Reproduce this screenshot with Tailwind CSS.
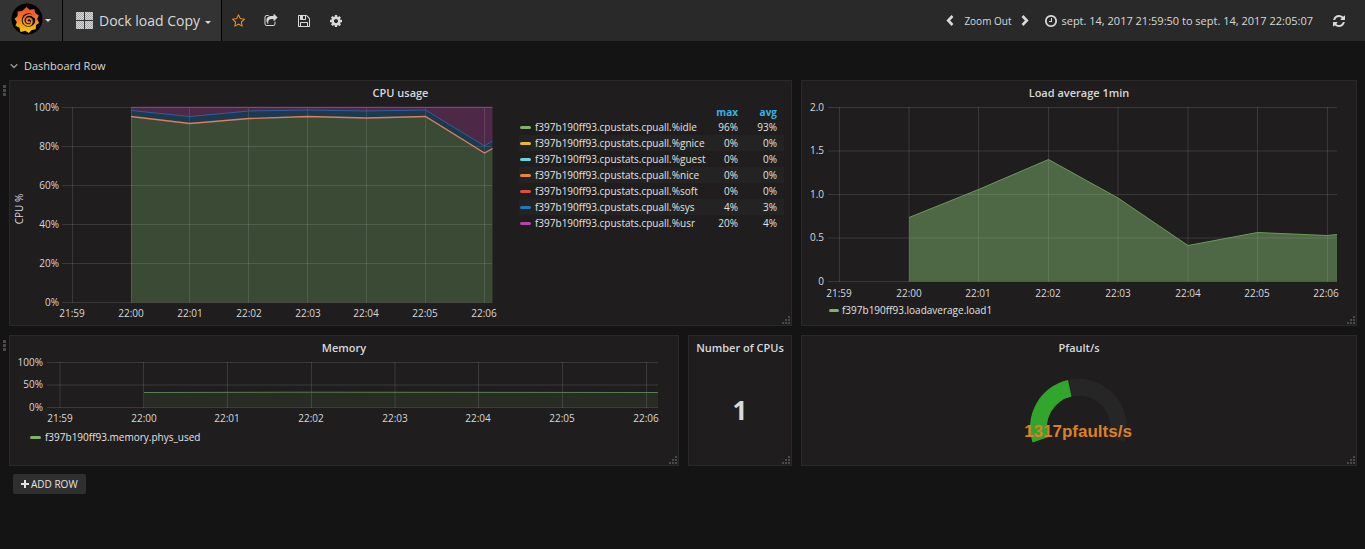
<!DOCTYPE html>
<html lang="en">
<head>
<meta charset="utf-8">
<meta name="viewport" content="width=device-width, initial-scale=1">
<title>Dock load Copy</title>
<script src="https://cdn.jsdelivr.net/npm/@tailwindcss/browser@4"></script>
</head>
<body class="min-h-screen bg-[#141414] font-['Open_Sans',sans-serif] text-[#d8d9da]">
<svg class="hidden" aria-hidden="true">
  <symbol id="grip" viewBox="0 0 9 9"><path fill="#4a4a4a" d="M6 0h2v2H6zM3 3h2v2H3zM6 3h2v2H6zM0 6h2v2H0zM3 6h2v2H3zM6 6h2v2H6z"/></symbol>
</svg>

<header class="flex h-[41px] items-stretch bg-[#292929]">
  <button aria-label="Main menu" class="flex w-[63px] items-center border-r border-black bg-[#333] pr-1 pl-[11px]">
    <svg class="-mt-1 size-8" viewBox="0 0 32 32">
      <defs><linearGradient id="flame" gradientUnits="userSpaceOnUse" x1="0" y1="4" x2="0" y2="30"><stop offset="0" stop-color="#ef4e28"/><stop offset=".45" stop-color="#f37a26"/><stop offset="1" stop-color="#fcd30a"/></linearGradient></defs>
      <circle cx="16" cy="16" r="15.500" fill="#000"/>
      <path fill="url(#flame)" d="M15.500 4l3.200 2.800 4.600-.8.900 4 3.600 2.600-1.600 3.300 1.900 4-3 2.200-.4 4.200-4 .6-3 3-3.400-2.200-4.800 1.300-1-4.300-4-2 1.300-3.600-2.300-3.400 3-2.600.2-4.600 4.300-.4z"/>
      <circle cx="17.500" cy="17" r="6.800" fill="#000"/>
      <path fill="none" stroke="url(#flame)" stroke-width="1.900" stroke-linecap="round" d="M18.500 19.300c-2 .4-3.200-1-2.800-2.500.7-2.200 4-2.200 5 .3 1.200 3.200-1.500 5.700-4.300 5-3.800-1-4.800-5-2.900-7.600 2.400-3.400 7.300-3.300 9.800-.5"/>
    </svg>
    <svg class="ml-[2px] h-1 w-[6px]" viewBox="0 0 6 4"><path fill="#d8d9da" d="M0 0h6L3 3z"/></svg>
  </button>
  <button class="flex w-[159px] items-center border-r border-black bg-[#333] pl-[13px]">
    <svg class="size-[17px]" viewBox="0 0 17 17">
      <defs><pattern id="mesh" width="2" height="2" patternUnits="userSpaceOnUse"><path fill="#d6d7d8" d="M0 0h2v2H0z"/><path fill="#a6a8aa" d="M0 0h1v1H0zM1 1h1v1H1z"/></pattern></defs>
      <path fill="url(#mesh)" d="M0 0h8v8H0zM9 0h8v8H9zM0 9h8v8H0zM9 9h8v8H9z"/>
    </svg>
    <span class="ml-[6px] text-[14px] leading-5">Dock load Copy</span>
    <svg class="mt-1 ml-[5px] h-1 w-[6px]" viewBox="0 0 6 4"><path fill="#d8d9da" d="M0 0h6L3 3z"/></svg>
  </button>
  <div class="flex items-center gap-[18px] pl-[10px]">
    <button aria-label="Star"><svg class="size-[14px]" viewBox="0 0 1792 1792" fill="#f79520"><path d="M1137 1004l306-297-422-62-189-382-189 382-422 62 306 297-73 421 378-199 377 199zm527-357q0 22-26 48l-363 354 86 500q1 7 1 20 0 50-41 50-19 0-40-12l-449-236-449 236q-22 12-40 12-21 0-31.500-14.500t-10.500-35.500q0-6 2-20l86-500-364-354q-25-27-25-48 0-37 56-46l502-73 225-455q19-41 49-41t49 41l225 455 502 73q56 9 56 46z"/></svg></button>
    <button aria-label="Share"><svg class="size-[14px]" viewBox="0 0 1792 1792" fill="#d8d9da"><path d="M1472 989v259q0 119-84.500 203.500t-203.500 84.500h-832q-119 0-203.500-84.500t-84.500-203.500v-832q0-119 84.500-203.500t203.500-84.500h255q13 0 22.500 9.500t9.500 22.500q0 27-26 32-77 26-133 60-10 4-16 4h-112q-66 0-113 47t-47 113v832q0 66 47 113t113 47h832q66 0 113-47t47-113v-214q0-19 18-29 28-13 54-37 16-16 35-8 21 9 21 29zm237-496l-384 384q-18 19-45 19-12 0-25-5-39-17-39-59v-192h-160q-323 0-438 131-119 137-74 473 3 23-20 34-8 2-12 2-16 0-26-13-10-14-21-31t-39.500-68.500-49.500-99.500-38.500-114-17.500-122q0-49 3.500-91t14-90 28-88 47-81.500 68.500-74 94.500-61.500 124.500-48.500 159.500-30.500 196.500-11h160v-192q0-42 39-59 13-5 25-5 26 0 45 19l384 384q19 19 19 45t-19 45z"/></svg></button>
    <button aria-label="Save" class="pl-px"><svg class="size-[14px]" viewBox="0 0 1792 1792" fill="#d8d9da"><path d="M512 1536h768v-384h-768v384zm896 0h128v-896q0-14-10-38.500t-20-34.500l-281-281q-10-10-34-20t-39-10v416q0 40-28 68t-68 28h-576q-40 0-68-28t-28-68v-416h-128v1280h128v-416q0-40 28-68t68-28h832q40 0 68 28t28 68v416zm-384-928v-320q0-13-9.500-22.500t-22.500-9.500h-192q-13 0-22.500 9.500t-9.500 22.500v320q0 13 9.500 22.500t22.500 9.500h192q13 0 22.500-9.500t9.500-22.500zm640 32v928q0 40-28 68t-68 28h-1344q-40 0-68-28t-28-68v-1344q0-40 28-68t68-28h928q40 0 88 20t76 48l280 280q28 28 48 76t20 88z"/></svg></button>
    <button aria-label="Settings"><svg class="size-[14px]" viewBox="0 0 1792 1792" fill="#d8d9da"><path d="M1152 896q0-106-75-181t-181-75-181 75-75 181 75 181 181 75 181-75 75-181zm512-109v222q0 12-8 23t-20 13l-185 28q-19 54-39 91 35 50 107 138 10 12 10 25t-9 23q-27 37-99 108t-94 71q-12 0-26-9l-138-108q-44 23-91 38-16 136-29 186-7 28-36 28h-222q-14 0-24.500-8.500t-11.500-21.500l-28-184q-49-16-90-37l-141 107q-10 9-25 9-14 0-25-11-126-114-165-168-7-10-7-23 0-12 8-23 15-21 51-66.500t54-70.500q-27-50-41-99l-183-27q-13-2-21-12.500t-8-23.500v-222q0-12 8-23t19-13l186-28q14-46 39-92-40-57-107-138-10-12-10-24 0-10 9-23 26-36 98.500-107.500t94.500-71.500q13 0 26 10l138 107q44-23 91-38 16-136 29-186 7-28 36-28h222q14 0 24.500 8.500t11.500 21.500l28 184q49 16 90 37l142-107q9-9 24-9 13 0 25 10 129 119 165 170 7 8 7 22 0 12-8 23-15 21-51 66.500t-54 70.500q26 50 41 98l183 28q13 2 21 12.500t8 23.500z"/></svg></button>
  </div>
  <div class="ml-auto flex items-center pr-5">
    <button aria-label="Shift time range back"><svg class="h-[11px] w-2" viewBox="0 0 8 11"><path fill="none" stroke="#d8d9da" stroke-width="2.600" d="M6.500 1L2.200 5.500l4.300 4.500"/></svg></button>
    <button class="ml-[10px] text-[10px] leading-4">Zoom Out</button>
    <button aria-label="Shift time range forward" class="ml-[10px]"><svg class="h-[11px] w-2" viewBox="0 0 8 11"><path fill="none" stroke="#d8d9da" stroke-width="2.600" d="M1.500 1l4.300 4.500L1.500 10"/></svg></button>
    <button class="ml-4 flex items-center gap-1 text-[11px] leading-4">
      <svg class="size-3 shrink-0" viewBox="128 128 1536 1536" fill="#d8d9da"><path d="M1024 544v448q0 14-9 23t-23 9h-320q-14 0-23-9t-9-23v-64q0-14 9-23t23-9h224v-352q0-14 9-23t23-9h64q14 0 23 9t9 23zm416 352q0-148-73-273t-198-198-273-73-273 73-198 198-73 273 73 273 198 198 273 73 273-73 198-198 73-273zm224 0q0 209-103 385.500t-279.500 279.500-385.500 103-385.500-103-279.500-279.500-103-385.500 103-385.500 279.500-279.500 385.500-103 385.500 103 279.500 279.500 103 385.500z"/></svg>
      <span>sept. 14, 2017 21:59:50 to sept. 14, 2017 22:05:07</span>
    </button>
    <button aria-label="Refresh" class="ml-5"><svg class="size-3" viewBox="128 128 1536 1536" fill="#d8d9da"><path d="M1639 1056q0 5-1 7-64 268-268 434.500t-478 166.500q-146 0-282.500-55t-243.500-157l-129 129q-19 19-45 19t-45-19-19-45v-448q0-26 19-45t45-19h448q26 0 45 19t19 45-19 45l-137 137q71 66 161 102t187 36q134 0 250-65t186-179q11-17 53-117 8-23 30-23h192q13 0 22.500 9.500t9.500 22.500zm25-800v448q0 26-19 45t-45 19h-448q-26 0-45-19t-19-45 19-45l138-138q-148-137-349-137-134 0-250 65t-186 179q-11 17-53 117-8 23-30 23h-199q-13 0-22.500-9.500t-9.500-22.500v-7q65-268 270-434.500t480-166.500q146 0 284 55.500t245 156.500l130-129q19-19 45-19t45 19 19 45z"/></svg></button>
  </div>
</header>

<main class="pt-4 pr-2">
  <button class="ml-[10px] flex items-center gap-[6px] text-[11px] leading-[18px]">
    <svg class="h-2 w-2" viewBox="0 0 8 8"><path fill="none" stroke="#999" stroke-width="1.300" d="M.7 2.200L4 5.500l3.300-3.300"/></svg>
    Dashboard Row
  </button>

  <div class="mt-[5px] grid grid-cols-[670fr_104fr_556fr] gap-[9px] pl-[9px]">
    <section class="relative col-span-2 flex flex-col border border-[#292929] bg-[#1f1d1d]">
      <svg class="absolute top-1 -left-[7px] h-3 w-1" viewBox="0 0 4 12"><path fill="#4a4a4a" d="M0 0h3v3H0zM0 4h3v3H0zM0 8h3v3H0z"/></svg>
      <h2 class="text-center text-[11px] leading-6 font-semibold">CPU usage</h2>
      <div class="flex h-[220px]">
        <svg class="h-full min-w-0 flex-1 overflow-visible" viewBox="10 105 490 220" preserveAspectRatio="none" font-size="10" fill="#d8d9da" role="img" aria-label="CPU usage over time">
          <path fill="#7eb26d" fill-opacity=".3" d="M131 116.500L190 123.500 249 118.500 308 116.500 366.500 118 425.500 116.500 484.500 153 492.500 148.500V302.500H131z"/>
          <path fill="#1f78c1" fill-opacity=".3" d="M131 116.500L190 123.500 249 118.500 308 116.500 366.500 118 425.500 116.500 484.500 153 492.500 148.500V141L484.500 146 425.500 110 366.500 111 308 110 249 111 190 116.500 131 110.500z"/>
          <path fill="#ba43a9" fill-opacity=".3" d="M131 110.500L190 116.500 249 111 308 110 366.500 111 425.500 110 484.500 146 492.500 141V106.500H131z"/>
          <path fill="none" stroke="#c8c8c8" stroke-opacity=".16" d="M62 107.500H492M62 146.500H492M62 185.500H492M62 224.500H492M62 263.500H492M62 302.500H492M72.500 107V303M131.500 107V303M189.500 107V303M248.500 107V303M307.500 107V303M366.500 107V303M425.500 107V303M484.500 107V303"/>
          <path fill="none" stroke="#d9805c" stroke-width="1.300" d="M131 116.500L190 123.500 249 118.500 308 116.500 366.500 118 425.500 116.500 484.500 153 492.500 148.500"/>
          <path fill="none" stroke="#2d5fa0" d="M131 110.500L190 116.500 249 111 308 110 366.500 111 425.500 110 484.500 146 492.500 141"/>
          <path fill="none" stroke="#8a3f80" d="M131 107.500H492.500"/>
          <g text-anchor="end"><text x="59" y="111">100%</text><text x="59" y="150">80%</text><text x="59" y="189">60%</text><text x="59" y="228">40%</text><text x="59" y="267">20%</text><text x="59" y="306">0%</text></g>
          <g text-anchor="middle"><text x="72" y="317">21:59</text><text x="131" y="317">22:00</text><text x="190" y="317">22:01</text><text x="249" y="317">22:02</text><text x="308" y="317">22:03</text><text x="366" y="317">22:04</text><text x="425" y="317">22:05</text><text x="484" y="317">22:06</text></g>
          <text transform="translate(23 209) rotate(-90)" text-anchor="middle">CPU %</text>
        </svg>
        <div class="w-[291px] pr-[7px] pl-[19px]">
          <table class="w-full text-[10px] leading-4 text-[#e3e3e3]">
            <thead><tr class="text-right leading-[14px] text-[#33b5e5]"><td class="w-[172px] p-0"></td><th scope="col" class="p-0 font-bold">max</th><th scope="col" class="w-[46px] p-0 pr-[7px] font-bold">avg</th></tr></thead>
            <tbody class="text-right">
              <tr><td class="flex items-center p-0 pl-px"><i class="mr-1 h-[3px] w-[11px] rounded-sm bg-[#7eb26d]"></i>f397b190ff93.cpustats.cpuall.%idle</td><td class="p-0">96%</td><td class="p-0 pr-[7px]">93%</td></tr>
              <tr class="bg-[#242323]"><td class="flex items-center p-0 pl-px"><i class="mr-1 h-[3px] w-[11px] rounded-sm bg-[#eab839]"></i>f397b190ff93.cpustats.cpuall.%gnice</td><td class="p-0">0%</td><td class="p-0 pr-[7px]">0%</td></tr>
              <tr><td class="flex items-center p-0 pl-px"><i class="mr-1 h-[3px] w-[11px] rounded-sm bg-[#6ed0e0]"></i>f397b190ff93.cpustats.cpuall.%guest</td><td class="p-0">0%</td><td class="p-0 pr-[7px]">0%</td></tr>
              <tr class="bg-[#242323]"><td class="flex items-center p-0 pl-px"><i class="mr-1 h-[3px] w-[11px] rounded-sm bg-[#ef843c]"></i>f397b190ff93.cpustats.cpuall.%nice</td><td class="p-0">0%</td><td class="p-0 pr-[7px]">0%</td></tr>
              <tr><td class="flex items-center p-0 pl-px"><i class="mr-1 h-[3px] w-[11px] rounded-sm bg-[#e24d42]"></i>f397b190ff93.cpustats.cpuall.%soft</td><td class="p-0">0%</td><td class="p-0 pr-[7px]">0%</td></tr>
              <tr class="bg-[#242323]"><td class="flex items-center p-0 pl-px"><i class="mr-1 h-[3px] w-[11px] rounded-sm bg-[#1f78c1]"></i>f397b190ff93.cpustats.cpuall.%sys</td><td class="p-0">4%</td><td class="p-0 pr-[7px]">3%</td></tr>
              <tr><td class="flex items-center p-0 pl-px"><i class="mr-1 h-[3px] w-[11px] rounded-sm bg-[#ba43a9]"></i>f397b190ff93.cpustats.cpuall.%usr</td><td class="p-0">20%</td><td class="p-0 pr-[7px]">4%</td></tr>
            </tbody>
          </table>
        </div>
      </div>
      <svg class="absolute right-0 bottom-0 size-[9px]"><use href="#grip"/></svg>
    </section>

    <section class="relative flex flex-col border border-[#292929] bg-[#1f1d1d]">
      <h2 class="text-center text-[11px] leading-6 font-semibold">Load average 1min</h2>
      <svg class="h-[197px] w-full overflow-visible" viewBox="802 105 554 197" preserveAspectRatio="none" font-size="10" fill="#d8d9da" role="img" aria-label="Load average over time">
        <path fill="#7eb26d" fill-opacity=".5" d="M909 217.500L978.500 189.500 1048.500 159.500 1118 198 1188 245.500 1257.500 232.500 1327 235.500 1337 234.500V281.500H909z"/>
        <path fill="none" stroke="#c8c8c8" stroke-opacity=".16" d="M828 107.500H1337M828 151H1337M828 194.500H1337M828 238H1337M828 281.500H1337M839.500 107V282M909 107V282M978.500 107V282M1048.500 107V282M1118 107V282M1188 107V282M1257.500 107V282M1327.500 107V282"/>
        <path fill="none" stroke="#6a9a5c" d="M909 217.500L978.500 189.500 1048.500 159.500 1118 198 1188 245.500 1257.500 232.500 1327 235.500 1337 234.500"/>
        <g text-anchor="end"><text x="824" y="111">2.0</text><text x="824" y="154">1.5</text><text x="824" y="198">1.0</text><text x="824" y="241">0.5</text><text x="824" y="285">0</text></g>
        <g text-anchor="middle"><text x="839" y="297">21:59</text><text x="909" y="297">22:00</text><text x="978" y="297">22:01</text><text x="1048" y="297">22:02</text><text x="1118" y="297">22:03</text><text x="1188" y="297">22:04</text><text x="1257" y="297">22:05</text><text x="1326" y="297">22:06</text></g>
      </svg>
      <p class="flex items-center pl-[27px] text-[10px] leading-4 text-[#e3e3e3]"><i class="mr-[3px] h-[3px] w-[10px] rounded-sm bg-[#7eb26d]"></i>f397b190ff93.loadaverage.load1</p>
      <svg class="absolute right-0 bottom-0 size-[9px]"><use href="#grip"/></svg>
    </section>

    <section class="relative flex h-[131px] flex-col border border-[#292929] bg-[#1f1d1d]">
      <svg class="absolute top-1 -left-[7px] h-3 w-1" viewBox="0 0 4 12"><path fill="#4a4a4a" d="M0 0h3v3H0zM0 4h3v3H0zM0 8h3v3H0z"/></svg>
      <h2 class="text-center text-[11px] leading-6 font-semibold">Memory</h2>
      <svg class="h-[69px] w-full overflow-visible" viewBox="10 360 668 69" preserveAspectRatio="none" font-size="10" fill="#d8d9da" role="img" aria-label="Memory over time">
        <path fill="#7eb26d" fill-opacity=".1" d="M144 392.500H658V407.500H144z"/>
        <path fill="none" stroke="#c8c8c8" stroke-opacity=".16" d="M47 362.500H658M47 385H658M47 407.500H658M60 362V408M143.500 362V408M227.500 362V408M311.500 362V408M395 362V408M478.500 362V408M562.500 362V408M646.500 362V408"/>
        <path fill="none" stroke="#5b8050" d="M144 392.500L300 392.200 658 392.500"/>
        <g text-anchor="end"><text x="43" y="366">100%</text><text x="43" y="388">50%</text><text x="43" y="411">0%</text></g>
        <g text-anchor="middle"><text x="60" y="422">21:59</text><text x="144" y="422">22:00</text><text x="227" y="422">22:01</text><text x="311" y="422">22:02</text><text x="395" y="422">22:03</text><text x="478" y="422">22:04</text><text x="562" y="422">22:05</text><text x="646" y="422">22:06</text></g>
      </svg>
      <p class="flex items-center pl-5 text-[10px] leading-4 text-[#e3e3e3]"><i class="mr-1 h-[3px] w-[11px] rounded-sm bg-[#7eb26d]"></i>f397b190ff93.memory.phys_used</p>
      <svg class="absolute right-0 bottom-0 size-[9px]"><use href="#grip"/></svg>
    </section>

    <section class="relative flex flex-col border border-[#292929] bg-[#1f1d1d]">
      <h2 class="text-center text-[11px] leading-6 font-semibold whitespace-nowrap">Number of CPUs</h2>
      <p class="flex flex-1 items-center justify-center pb-[6px] text-[26px] leading-8 font-bold">1</p>
      <svg class="absolute right-0 bottom-0 size-[9px]"><use href="#grip"/></svg>
    </section>

    <section class="relative flex flex-col border border-[#292929] bg-[#1f1d1d]">
      <h2 class="text-center text-[11px] leading-6 font-semibold">Pfault/s</h2>
      <svg class="h-[104px] w-full" viewBox="0 2 554 104" role="img" aria-label="1317 pfaults per second">
        <path fill="#262626" d="M267 21.500A48.500 48.500 0 0 1 322.500 84L307 78.500A31.500 31.500 0 0 0 270 38.500z"/>
        <path fill="#32a52c" d="M230.500 84.500A48.500 48.500 0 0 1 266 22L269.500 38.500A31.500 31.500 0 0 0 246.500 79z"/>
        <text x="276" y="79" text-anchor="middle" font-family="Liberation Sans, Arial, sans-serif" font-size="17" font-weight="700" fill="#df7f25">1317pfaults/s</text>
      </svg>
      <svg class="absolute right-0 bottom-0 size-[9px]"><use href="#grip"/></svg>
    </section>
  </div>

  <button class="mt-2 ml-[13px] flex h-5 items-center gap-[2px] rounded-[2px] bg-[#2f2f2f] px-2 text-[10px] text-[#e3e3e3]">
    <svg class="size-2" viewBox="0 0 8 8"><path fill="#e3e3e3" d="M3 0h2v3h3v2H5v3H3V5H0V3h3z"/></svg>
    ADD ROW
  </button>
</main>
</body>
</html>
